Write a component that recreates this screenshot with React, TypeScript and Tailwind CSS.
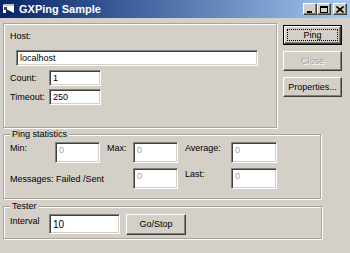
import React from "react";

const raised =
  "border border-t-white border-l-white border-b-[#404040] border-r-[#404040] shadow-[inset_-1px_-1px_0_#808080]";
const sunken =
  "border border-t-[#808080] border-l-[#808080] border-b-white border-r-white shadow-[inset_1px_1px_0_#404040,inset_-1px_-1px_0_#d4d0c8] bg-white";
const etched =
  "border border-[#a8a49c] shadow-[1px_1px_0_#fff,inset_1px_1px_0_#fff]";

function TextBox({ value, className, disabled }: { value: string; className: string; disabled?: boolean }) {
  return (
    <div className={`${sunken} ${className} pl-[3px] pt-[2px] ${disabled ? "text-[#a0a0a0]" : "text-black"}`}>
      {value}
    </div>
  );
}

function Button({ label, disabled, isDefault, className }: { label: string; disabled?: boolean; isDefault?: boolean; className: string }) {
  if (isDefault) {
    return (
      <div className={`${className} border border-black`}>
        <div className={`${raised} h-full w-full p-[2px]`}>
          <div className="h-full w-full border border-dotted border-black flex items-center justify-center">{label}</div>
        </div>
      </div>
    );
  }
  return (
    <div
      className={`${raised} ${className} flex items-center justify-center ${
        disabled ? "text-[#a0a0a0] [text-shadow:1px_1px_0_#fff]" : "text-black"
      }`}
    >
      {label}
    </div>
  );
}

function Group({ caption, className, children }: { caption: string; className: string; children: React.ReactNode }) {
  return (
    <div className={`relative ${etched} ${className}`}>
      <span className="absolute -top-[6px] left-[6px] bg-[#d4d0c8] px-[2px]">{caption}</span>
      {children}
    </div>
  );
}

function CaptionButton({ children, className = "" }: { children: React.ReactNode; className?: string }) {
  return (
    <div className={`${raised} w-[14px] h-[12px] bg-[#d4d0c8] flex items-center justify-center ${className}`}>
      {children}
    </div>
  );
}

export default function App() {
  return (
    <div className="w-[350px] h-[253px] overflow-hidden bg-[#d4d0c8] text-[9px] leading-[11px] text-black font-['Liberation_Sans',Arial,sans-serif]">
      {/* title bar */}
      <div className="h-[18px] flex items-center bg-linear-to-r from-[#0a246a] to-[#a6caf0]">
        <svg width="12" height="11" viewBox="0 0 12 11" className="ml-[3px]">
          <rect x="0" y="0" width="11" height="9" fill="#fff" />
          <rect x="0" y="0" width="11" height="2" fill="#c0c0c0" />
          <path d="M3 5 L11 9 L11 11 L3 11 Z" fill="#0a246a" />
          <rect x="1" y="3" width="3" height="3" fill="#404040" />
        </svg>
        <span className="ml-[4px] text-white font-bold text-[11px]">GXPing Sample</span>
        <div className="ml-auto flex items-center pr-[3px]">
          <CaptionButton>
            <div className="w-[5px] h-[2px] bg-black mt-[5px] -ml-[2px]" />
          </CaptionButton>
          <CaptionButton>
            <div className="w-[8px] h-[7px] border border-black border-t-2" />
          </CaptionButton>
          <CaptionButton className="ml-[2px]">
            <svg width="8" height="7" viewBox="0 0 8 7">
              <path d="M0.5 0.5 L7.5 6.5 M7.5 0.5 L0.5 6.5" stroke="#000" strokeWidth="1.6" />
            </svg>
          </CaptionButton>
        </div>
      </div>

      {/* body */}
      <div className="px-[3px] pt-[5px]">
        <div className="flex">
          <div className={`${etched} w-[274px] h-[105px] pl-[6px] pt-[7px]`}>
            <div>Host:</div>
            <TextBox value="localhost" className="mt-[8px] ml-[6px] w-[242px] h-[16px] pt-[1px]" />
            <div className="flex items-center mt-[4px]">
              <span className="w-[39px]">Count:</span>
              <TextBox value="1" className="w-[52px] h-[16px] pt-[1px]" />
            </div>
            <div className="flex items-center mt-[3px]">
              <span className="w-[39px]">Timeout:</span>
              <TextBox value="250" className="w-[52px] h-[16px] pt-[1px]" />
            </div>
          </div>
          <div className="ml-[6px] pt-[2px] flex flex-col gap-[6px]">
            <Button label="Ping" isDefault className="w-[59px] h-[20px]" />
            <Button label="Close" disabled className="w-[59px] h-[20px]" />
            <Button label="Properties..." className="w-[59px] h-[20px]" />
          </div>
        </div>

        <Group caption="Ping statistics" className="mt-[6px] w-[318px] h-[65px] pl-[6px] pt-[7px]">
          <div className="flex items-start">
            <span className="w-[45px] pt-[1px]">Min:</span>
            <TextBox value="0" disabled className="w-[45px] h-[21px]" />
            <span className="ml-[7px] w-[26px] pt-[1px]">Max:</span>
            <TextBox value="0" disabled className="w-[45px] h-[21px]" />
            <span className="ml-[7px] w-[46px] pt-[1px]">Average:</span>
            <TextBox value="0" disabled className="w-[46px] h-[21px]" />
          </div>
          <div className="flex items-start mt-[5px]">
            <span className="w-[123px] mt-[6px]">Messages: Failed /Sent</span>
            <TextBox value="0" disabled className="w-[45px] h-[21px]" />
            <span className="ml-[7px] w-[46px] pt-[1px]">Last:</span>
            <TextBox value="0" disabled className="w-[46px] h-[21px]" />
          </div>
        </Group>

        <Group caption="Tester" className="mt-[7px] w-[319px] h-[33px] pl-[6px] pt-[7px]">
          <div className="flex items-start">
            <span className="w-[39px] pt-[2px]">Interval</span>
            <TextBox value="10" className="w-[71px] h-[20px] pt-[4px] text-[10px]" />
            <Button label="Go/Stop" className="ml-[6px] w-[60px] h-[21px]" />
          </div>
        </Group>
      </div>
    </div>
  );
}
